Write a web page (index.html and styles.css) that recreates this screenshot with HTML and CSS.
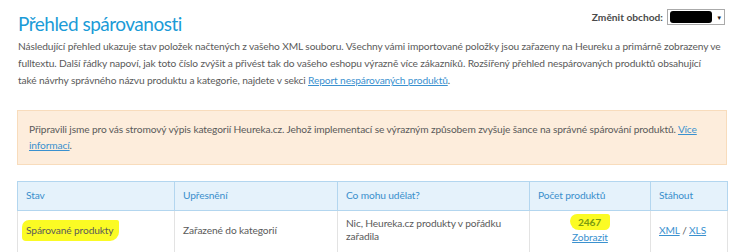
FILE: index.html
```html
<!DOCTYPE html>
<html lang="cs">
<head>
<meta charset="utf-8">
<link rel="stylesheet" href="styles.css">
</head>
<body>
<div class="page">
  <div class="head">
    <h1 class="title">Přehled spárovanosti</h1>
    <div class="shop">
      <label class="shop-label">Změnit obchod:</label>
      <div class="select"><span class="redact"></span><span class="arrow">▼</span></div>
    </div>
  </div>
  <p class="intro">Následující přehled ukazuje stav položek načtených z vašeho XML souboru. Všechny vámi importované položky jsou zařazeny na Heureku a primárně zobrazeny ve fulltextu. Další řádky napoví, jak toto číslo zvýšit a přivést tak do vašeho eshopu výrazně více zákazníků. Rozšířený přehled nespárovaných produktů obsahující<br>také návrhy správného názvu produktu a kategorie, najdete v sekci <a href="#">Report nespárovaných produktů</a>.</p>
  <div class="notice">Připravili jsme pro vás stromový výpis kategorií Heureka.cz. Jehož implementací se výrazným způsobem zvyšuje šance na správné spárování produktů. <a href="#">Více informací</a>.</div>
  <table class="grid">
    <colgroup>
      <col class="c1"><col class="c2"><col class="c3"><col class="c4"><col class="c5">
    </colgroup>
    <thead>
      <tr>
        <th>Stav</th>
        <th>Upřesnění</th>
        <th>Co mohu udělat?</th>
        <th>Počet produktů</th>
        <th>Stáhout</th>
      </tr>
    </thead>
    <tbody>
      <tr>
        <td><span class="hl hl-name">Spárované produkty</span></td>
        <td>Zařazené do kategorií</td>
        <td>Nic, Heureka.cz produkty v pořádku zařadila</td>
        <td class="count"><span class="hl hl-num">2467</span><br><a href="#">Zobrazit</a></td>
        <td><a href="#">XML</a> / <a href="#">XLS</a></td>
      </tr>
    </tbody>
  </table>
</div>
</body>
</html>
```
FILE: styles.css
```css
html, body { margin: 0; padding: 0; background: #fff; }
body { font-family: Lato, "Open Sans", sans-serif; color: #5a5a5a; font-size: 10.2px; letter-spacing: -0.12px; }
.page { width: 710px; margin-left: 17px; }
.head { display: flex; justify-content: space-between; align-items: flex-start; }
.title { margin: 11px 0 0 1px; font-size: 19px; letter-spacing: -0.5px; font-weight: 400; color: #1b9bd7; line-height: 25px; }
.shop { display: flex; align-items: center; gap: 4px; margin-top: 9px; margin-right: 2px; }
.shop-label { font-weight: 700; color: #4a4a4a; font-size: 10.2px; letter-spacing: 0; }
.select { width: 52px; height: 14px; border: 1px solid #aaa; display: flex; align-items: center; padding: 0 2px; gap: 4px; }
.redact { flex: 1; height: 12px; background: #000; border-radius: 3px; }
.arrow { font-size: 6px; color: #222; }
.intro { margin: 2px 0 0 1px; line-height: 17px; }
a { color: #3a91cf; text-decoration: underline; }
.notice { margin-top: 21px; background: #fdeddc; border: 1px solid #f8dcbc; padding: 10px 16px 11px 11px; line-height: 16px; }
.grid { margin-top: 16px; width: 710px; border-collapse: collapse; table-layout: fixed; }
.c1 { width: 157px; } .c2 { width: 163px; } .c3 { width: 192px; } .c4 { width: 121px; } .c5 { width: 77px; }
.grid th { background: #e5f2fb; color: #3a8fcc; font-weight: 400; text-align: left; height: 25px; padding: 0 8px 3px; border: 1px solid #b3d6ef; }
.grid td { padding: 4px 8px 7px; border: 1px solid #e3e3e3; border-top: none; vertical-align: middle; line-height: 13px; height: 30px; }
.grid td.count { text-align: center; line-height: 15px; }
.hl { background: #fbfb24; }
.hl-name { padding: 4px 5px 5px 4px; margin-left: -4px; border-radius: 7px 2px 9px 4px; }
.hl-num { padding: 2px 9px 2px 8px; color: #7a9a10; font-weight: 700; border-radius: 8px 3px 6px 10px; }
```
